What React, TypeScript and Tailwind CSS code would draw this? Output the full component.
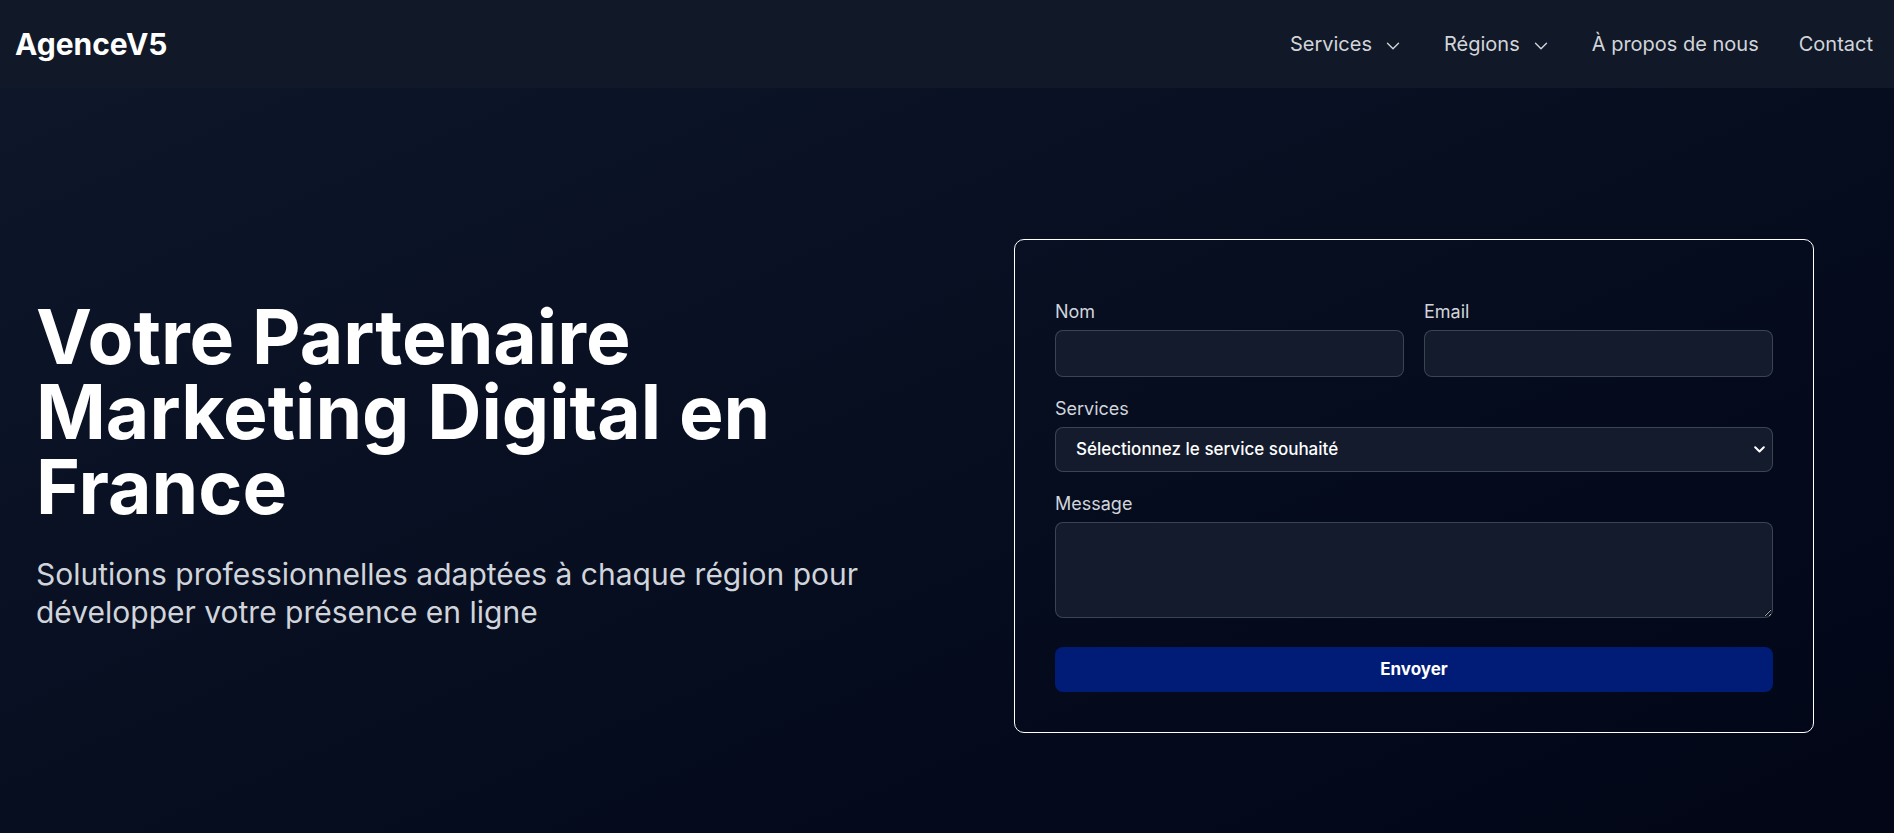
import React from "react";
import { ChevronDown } from "lucide-react";

function NavItem({ label, drop }: { label: string; drop?: boolean }) {
  return (
    <a href="#" className="flex items-center gap-[10px] text-[20px] text-[#d1d5db]">
      {label}
      {drop && <ChevronDown size={22} strokeWidth={1.5} className="mt-[3px]" />}
    </a>
  );
}

function ContactForm() {
  return (
    <form className="w-[800px] shrink-0 border border-white rounded-[10px] px-10 pt-[58px] pb-10">
      <div className="grid grid-cols-2 gap-5">
        <div>
          <label className="block text-[18px] leading-7 text-[#d1d5db] mb-1">Nom</label>
          <input
            type="text"
            className="block w-full h-[47px] rounded-lg border border-[#4b5563]/70 bg-[#131b2d] px-4 text-white outline-none"
          />
        </div>
        <div>
          <label className="block text-[18px] leading-7 text-[#d1d5db] mb-1">Email</label>
          <input
            type="email"
            className="block w-full h-[47px] rounded-lg border border-[#4b5563]/70 bg-[#131b2d] px-4 text-white outline-none"
          />
        </div>
      </div>

      <div className="mt-[18px]">
        <label className="block text-[18px] leading-7 text-[#d1d5db] mb-1">Services</label>
        <div className="relative">
          <select className="block w-full h-[45px] appearance-none rounded-lg border border-[#4b5563]/70 bg-[#131b2d] pl-5 pr-10 text-[17px] font-medium text-white outline-none">
            <option>Sélectionnez le service souhaité</option>
            <option>SEO</option>
            <option>Publicité en ligne</option>
            <option>Réseaux sociaux</option>
          </select>
          <svg
            className="pointer-events-none absolute right-[8px] top-[19px]"
            width="11"
            height="7"
            viewBox="0 0 11 7"
            fill="none"
          >
            <path d="M1.2 1.2 L5.5 5.5 L9.8 1.2" stroke="white" strokeWidth="2" strokeLinecap="round" strokeLinejoin="round" />
          </svg>
        </div>
      </div>

      <div className="mt-[18px]">
        <label className="block text-[18px] leading-7 text-[#d1d5db] mb-1">Message</label>
        <textarea className="block w-full h-[96px] rounded-lg border border-[#4b5563]/70 bg-[#131b2d] px-4 py-2 text-white outline-none" />
      </div>

      <button
        type="submit"
        className="mt-[29px] block w-full h-[45px] rounded-lg bg-[#011c77] text-[17px] font-bold text-white"
      >
        Envoyer
      </button>
    </form>
  );
}

export default function App() {
  return (
    <div
      className="min-h-screen bg-linear-to-br from-[#0f172a] to-[#020617] text-white"
      style={{ fontFamily: "Inter, 'Noto Sans', sans-serif" }}
    >
      <header className="flex h-[88px] items-center justify-between bg-[#111827] pl-[15px] pr-[21px]">
        <a href="#" className="text-[30px] font-bold text-white">
          AgenceV5
        </a>
        <nav className="flex items-center gap-10">
          <NavItem label="Services" drop />
          <NavItem label="Régions" drop />
          <NavItem label="À propos de nous" />
          <NavItem label="Contact" />
        </nav>
      </header>

      <section className="flex items-start pl-[36px] pr-[80px] pt-[151px] pb-[100px]">
        <div className="w-[880px] pt-[60px]">
          <h1 className="text-[75px] leading-[75px] font-bold text-white">
            Votre Partenaire Marketing Digital en France
          </h1>
          <p className="mt-[31px] text-[30px] leading-[38px] text-[#d1d5db]">
            Solutions professionnelles adaptées à chaque région pour développer votre présence en ligne
          </p>
        </div>
        <div className="ml-auto">
          <ContactForm />
        </div>
      </section>
    </div>
  );
}
